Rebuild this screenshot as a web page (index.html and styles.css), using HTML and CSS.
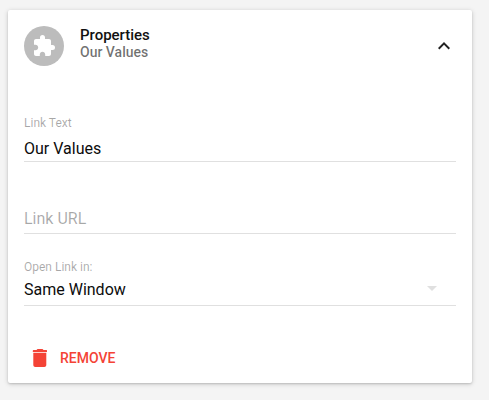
FILE: index.html
```html
<!DOCTYPE html>
<html lang="en">
<head>
<meta charset="utf-8">
<title>Properties</title>
<link rel="stylesheet" href="styles.css">
</head>
<body>
<section class="card">
  <header class="header">
    <div class="avatar">
      <svg width="24" height="24" viewBox="0 0 24 24" fill="#fff"><path d="M20.500 11H19V7c0-1.100-.9-2-2-2h-4V3.500a2.500 2.500 0 0 0-5 0V5H4c-1.100 0-1.990.9-1.990 2v3.800H3.500c1.490 0 2.700 1.210 2.700 2.700s-1.210 2.700-2.700 2.700H2V20c0 1.100.9 2 2 2h3.800v-1.500c0-1.490 1.210-2.700 2.700-2.700s2.700 1.210 2.700 2.700V22H17c1.100 0 2-.9 2-2v-4h1.500a2.500 2.500 0 0 0 0-5z"/></svg>
    </div>
    <div class="titles">
      <div class="title">Properties</div>
      <div class="subtitle">Our Values</div>
    </div>
    <svg class="chevron" width="24" height="24" viewBox="0 0 24 24" fill="#212121"><path d="M12 8l-6 6 1.410 1.410L12 10.830l4.590 4.580L18 14z"/></svg>
  </header>
  <div class="field text-field">
    <label class="label">Link Text</label>
    <div class="value">Our Values</div>
  </div>
  <div class="field url-field">
    <div class="value placeholder">Link URL</div>
  </div>
  <div class="field select-field">
    <label class="label">Open Link in:</label>
    <div class="value">Same Window
      <svg class="caret" width="24" height="24" viewBox="0 0 24 24" fill="#e0e0e0"><path d="M7 10l5 5 5-5z"/></svg>
    </div>
  </div>
  <div class="remove">
    <svg width="24" height="24" viewBox="0 0 24 24" fill="#f44336"><path d="M5.300 19c0 1.100.9 2 2 2h9c1.100 0 2-.9 2-2V6.800h-13zM18.500 4h-3l-1-1h-5l-1 1h-3q-.7 0-.7.700V6h14.200V4.700q0-.7-.5-.7z"/></svg>
    <span>REMOVE</span>
  </div>
</section>
</body>
</html>
```

FILE: styles.css
```css
* { box-sizing: border-box; }
body {
  margin: 0;
  padding: 10px 17px 17px 8px;
  height: 400px;
  background: #f4f4f4;
  font-family: Roboto, sans-serif;
  overflow: hidden;
}
.card {
  height: 373px;
  padding: 16px;
  background: #fff;
  border-radius: 2px;
  box-shadow: 0 1px 5px rgba(0,0,0,.18), 0 1px 2px rgba(0,0,0,.13);
}
.header { display: flex; height: 40px; }
.avatar {
  display: flex;
  align-items: center;
  justify-content: center;
  width: 40px;
  height: 40px;
  margin-right: 16px;
  border-radius: 50%;
  background: #bcbcbc;
}
.titles { flex: 1; padding-top: 1px; font-size: 14px; font-weight: 500; line-height: 17px; }
.title { font-size: 15px; color: #111; letter-spacing: -.02px; }
.subtitle { color: rgba(0,0,0,.56); }
.chevron { margin-top: 8px; }
.field {
  display: flex;
  flex-direction: column;
  justify-content: flex-end;
  height: 72px;
  border-bottom: 1px solid #e0e0e0;
}
.text-field { margin-top: 24px; }
.label { margin-bottom: 6px; font-size: 12px; line-height: 16px; color: rgba(0,0,0,.34); }
.value {
  display: flex;
  justify-content: space-between;
  height: 24px;
  font-size: 16px;
  line-height: 24px;
  color: #0c0c0c;
}
.placeholder { color: rgba(0,0,0,.34); }
.url-field { padding-bottom: 2px; }
.select-field { padding-bottom: 3px; }
.select-field .label { margin-bottom: 3px; }
.caret { margin: -2px 12px 0 0; }
.remove {
  display: flex;
  align-items: center;
  gap: 8px;
  height: 36px;
  margin: 34px 0 0 4px;
  color: #f44336;
  font-size: 14px;
  font-weight: 500;
}
```
